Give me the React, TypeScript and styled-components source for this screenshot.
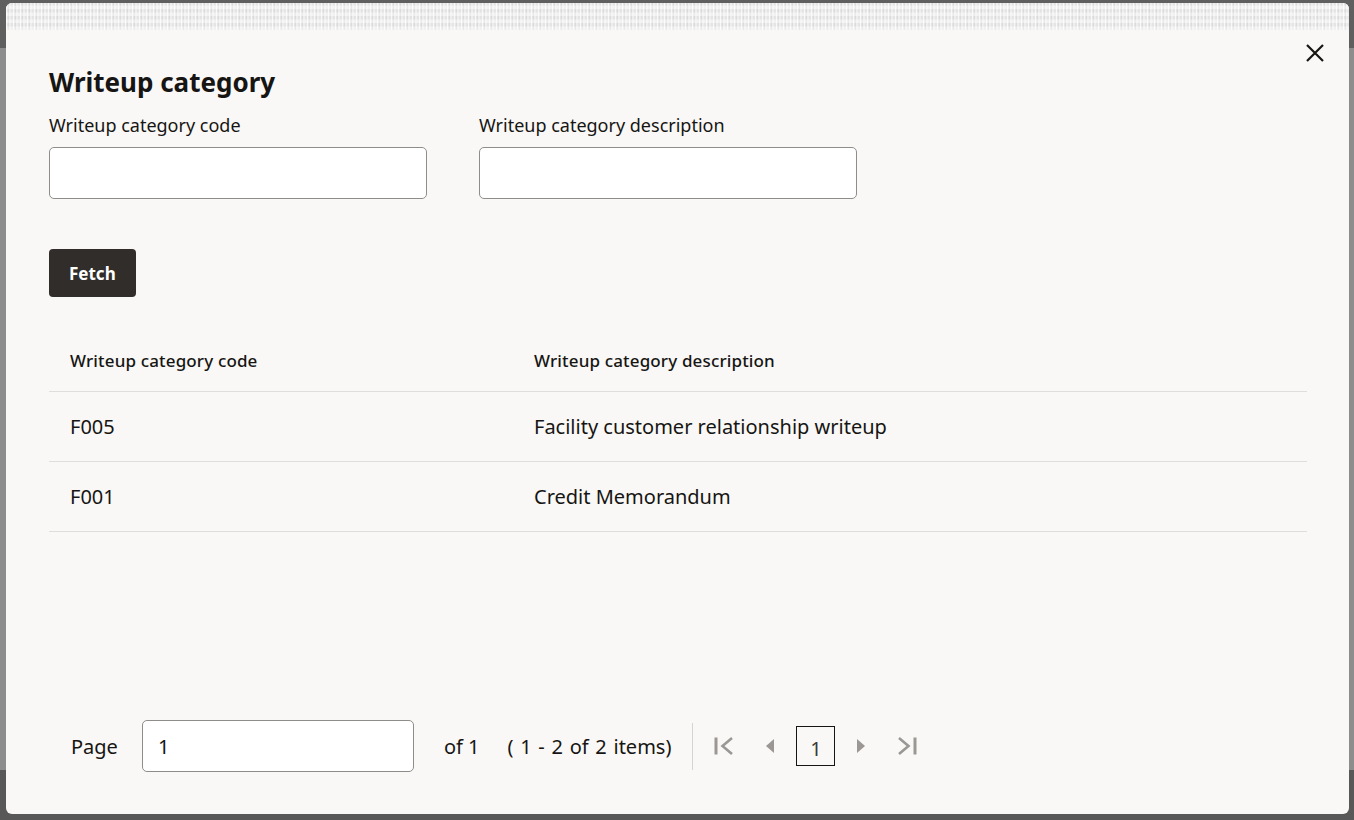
import styled, { createGlobalStyle } from 'styled-components';

const GlobalStyle = createGlobalStyle`
  html, body {
    margin: 0;
    padding: 0;
  }
  body {
    font-family: "Noto Sans", "Liberation Sans", sans-serif;
    color: #161513;
  }
  * {
    box-sizing: border-box;
  }
`;

type Row = {
  code: string;
  description: string;
};

const rows: Row[] = [
  { code: 'F005', description: 'Facility customer relationship writeup' },
  { code: 'F001', description: 'Credit Memorandum' },
];

const Backdrop = styled.div`
  width: 1354px;
  height: 820px;
  overflow: hidden;
  padding: 3px 5px 6px 6px;
  background: linear-gradient(
    to bottom,
    #5f5f5f 0 48px,
    #8d8d8d 48px 770px,
    #585858 770px
  );
`;

const Dialog = styled.section`
  height: 100%;
  display: flex;
  flex-direction: column;
  background: #f9f8f6;
  border-radius: 6px;
  overflow: hidden;
`;

// grainy strip along the top edge of the dialog
const Banner = styled.div`
  flex: 0 0 27px;
  background-color: #ebebeb;
  background-image: repeating-linear-gradient(
      90deg,
      rgba(255, 255, 255, 0.75) 0 1px,
      transparent 1px 2px,
      rgba(0, 0, 0, 0.04) 2px 3px,
      rgba(255, 255, 255, 0.35) 3px 5px,
      transparent 5px 7px
    ),
    repeating-linear-gradient(
      0deg,
      rgba(255, 255, 255, 0.3) 0 3px,
      transparent 3px 4px,
      rgba(0, 0, 0, 0.03) 4px 7px
    );
`;

const Body = styled.div`
  flex: 1;
  display: flex;
  flex-direction: column;
  padding: 0 42px 42px 43px;
`;

const HeaderRow = styled.div`
  display: flex;
  justify-content: space-between;
  align-items: flex-start;
`;

const Title = styled.h1`
  margin: 35px 0 0;
  font-size: 26px;
  line-height: 34px;
  font-weight: 700;
`;

const CloseButton = styled.button`
  width: 36px;
  height: 36px;
  margin: 5px -26px 0 0;
  padding: 0;
  border: none;
  background: transparent;
  display: flex;
  align-items: center;
  justify-content: center;
  color: #161513;
  cursor: pointer;
`;

const Fields = styled.div`
  display: flex;
  gap: 52px;
  margin-top: 14px;
`;

const Field = styled.label`
  display: flex;
  flex-direction: column;
  gap: 10px;
  width: 378px;
`;

const FieldLabel = styled.span`
  font-size: 18px;
  line-height: 24px;
`;

const TextInput = styled.input<{ $width?: number }>`
  width: ${(p) => (p.$width ? `${p.$width}px` : '100%')};
  height: 52px;
  padding: 0 15px;
  border: 1px solid #8f8d8a;
  border-radius: 5px;
  background: #fff;
  font-family: inherit;
  font-size: 20px;
  color: #161513;
  outline: none;
`;

const FetchButton = styled.button`
  align-self: flex-start;
  height: 48px;
  margin-top: 50px;
  padding: 0 20px;
  border: none;
  border-radius: 4px;
  background: #312d2a;
  color: #fff;
  font-family: inherit;
  font-size: 17px;
  font-weight: 700;
`;

const Table = styled.div`
  margin-top: 40px;
  display: flex;
  flex-direction: column;
`;

const TableRow = styled.div<{ $head?: boolean }>`
  display: grid;
  grid-template-columns: 464px 1fr;
  height: ${(p) => (p.$head ? '55px' : '70px')};
  padding: ${(p) => (p.$head ? '12px 21px 0' : '0 21px')};
  align-items: ${(p) => (p.$head ? 'start' : 'center')};
  border-bottom: 1px solid #e0dedb;
  font-size: ${(p) => (p.$head ? '17px' : '20px')};
  font-weight: ${(p) => (p.$head ? 500 : 400)};
  line-height: ${(p) => (p.$head ? '24px' : '28px')};
  letter-spacing: ${(p) => (p.$head ? '0.15px' : '0')};
`;

const Pager = styled.div`
  margin-top: auto;
  display: flex;
  align-items: center;
  padding-left: 22px;
  font-size: 20px;
`;

const PagerText = styled.span<{ $gap: number }>`
  margin-left: ${(p) => p.$gap}px;
`;

const ItemCount = styled.span`
  margin-left: 28px;
  word-spacing: 1.5px;
`;

const Divider = styled.span`
  width: 1px;
  height: 47px;
  margin-left: 21px;
  background: #d6d4d0;
`;

const PagerNav = styled.div`
  display: flex;
  align-items: center;
  gap: 6px;
  margin-left: 11px;
`;

const NavButton = styled.button`
  width: 40px;
  height: 40px;
  padding: 0;
  border: none;
  background: transparent;
  display: flex;
  align-items: center;
  justify-content: center;
  color: #9a9794;
`;

const CurrentPage = styled.span`
  width: 39px;
  height: 40px;
  border: 1px solid #161513;
  display: flex;
  align-items: center;
  justify-content: center;
  font-size: 20px;
  color: #3b3936;
  padding-top: 4px;
`;

const CloseIcon = () => (
  <svg width="18" height="18" viewBox="0 0 18 18">
    <path d="M1 1 L17 17 M17 1 L1 17" stroke="currentColor" strokeWidth="2.2" />
  </svg>
);

const FirstIcon = () => (
  <svg width="20" height="18" viewBox="0 0 20 18">
    <path d="M2 0.5 V17.5" stroke="currentColor" strokeWidth="3" />
    <path d="M18 1 L8.5 9 L18 17" fill="none" stroke="currentColor" strokeWidth="2.6" />
  </svg>
);

const LastIcon = () => (
  <svg width="20" height="18" viewBox="0 0 20 18">
    <path d="M18 0.5 V17.5" stroke="currentColor" strokeWidth="3" />
    <path d="M2 1 L11.5 9 L2 17" fill="none" stroke="currentColor" strokeWidth="2.6" />
  </svg>
);

const PrevIcon = () => (
  <svg width="10" height="14" viewBox="0 0 10 14">
    <path d="M9 0 V14 L1 7 Z" fill="currentColor" />
  </svg>
);

const NextIcon = () => (
  <svg width="10" height="14" viewBox="0 0 10 14">
    <path d="M1 0 V14 L9 7 Z" fill="currentColor" />
  </svg>
);

const App = () => {
  return (
    <>
      <GlobalStyle />
      <Backdrop>
        <Dialog>
          <Banner />
          <Body>
            <HeaderRow>
              <Title>Writeup category</Title>
              <CloseButton aria-label="Close">
                <CloseIcon />
              </CloseButton>
            </HeaderRow>
            <Fields>
              <Field>
                <FieldLabel>Writeup category code</FieldLabel>
                <TextInput />
              </Field>
              <Field>
                <FieldLabel>Writeup category description</FieldLabel>
                <TextInput />
              </Field>
            </Fields>
            <FetchButton>Fetch</FetchButton>
            <Table>
              <TableRow $head>
                <span>Writeup category code</span>
                <span>Writeup category description</span>
              </TableRow>
              {rows.map((row) => (
                <TableRow key={row.code}>
                  <span>{row.code}</span>
                  <span>{row.description}</span>
                </TableRow>
              ))}
            </Table>
            <Pager>
              <span>Page</span>
              <PagerText $gap={24}>
                <TextInput $width={272} defaultValue="1" />
              </PagerText>
              <PagerText $gap={30}>of 1</PagerText>
              <ItemCount>( 1 - 2 of 2 items)</ItemCount>
              <Divider />
              <PagerNav>
                <NavButton aria-label="First page">
                  <FirstIcon />
                </NavButton>
                <NavButton aria-label="Previous page">
                  <PrevIcon />
                </NavButton>
                <CurrentPage>1</CurrentPage>
                <NavButton aria-label="Next page">
                  <NextIcon />
                </NavButton>
                <NavButton aria-label="Last page">
                  <LastIcon />
                </NavButton>
              </PagerNav>
            </Pager>
          </Body>
        </Dialog>
      </Backdrop>
    </>
  );
};

export default App;
